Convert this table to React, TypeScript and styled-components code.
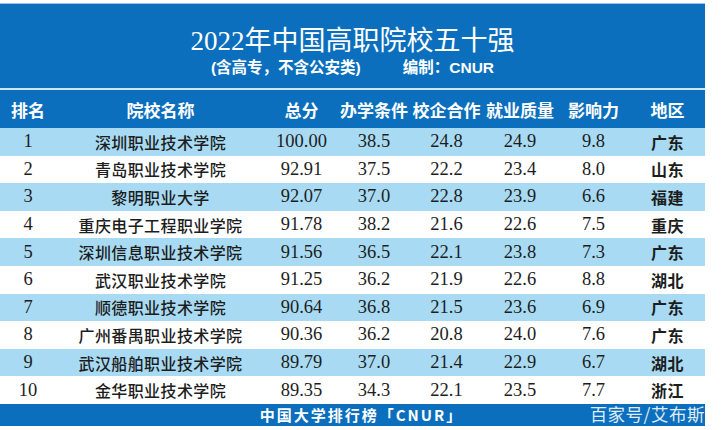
import React from "react";
import styled, { createGlobalStyle } from "styled-components";

const Global = createGlobalStyle`
  html, body { margin: 0; padding: 0; background: #ffffff; }
  body { font-family: "Noto Sans CJK SC", "Noto Sans", sans-serif; }
`;

const BLUE = "#0b6fbd";
const LIGHT = "#a8dbf3";
const COLS = "56px 209px 73px 72px 73px 74px 73px 75px";

const Page = styled.div`
  width: 705px;
  margin-top: 3px;
  position: relative;
`;

const TitleBand = styled.header`
  background: ${BLUE};
  border-top: 1px solid #8cc8f0;
  height: 87px;
  display: flex;
  flex-direction: column;
  align-items: center;
  color: #ffffff;
  box-sizing: border-box;
  padding-top: 22px;
  border-bottom: 2px solid #cfe6f7;
`;

const Title = styled.h1`
  margin: 0;
  font-family: "Liberation Serif", "Noto Sans CJK SC", serif;
  font-weight: 400;
  font-size: 27px;
  line-height: 30px;
`;

const Subtitle = styled.div`
  margin-top: 2px;
  display: flex;
  gap: 42px;
  font-family: "Liberation Sans", "Noto Sans CJK SC", sans-serif;
  font-weight: 700;
  font-size: 15.5px;
  line-height: 19px;
`;

const Grid = styled.div<{ $bg: string; $h: number }>`
  display: grid;
  grid-template-columns: ${COLS};
  height: ${(p) => p.$h}px;
  background: ${(p) => p.$bg};
  align-items: center;
`;

const HeadCell = styled.div<{ $align?: string }>`
  color: #ffffff;
  font-weight: 700;
  font-size: 17px;
  text-align: ${(p) => p.$align || "center"};
  white-space: nowrap;
  padding-left: ${(p) => (p.$align === "left" ? "11px" : "0")};
`;

const NumCell = styled.div`
  font-family: "Liberation Serif", serif;
  font-size: 18.5px;
  color: #1d1d1d;
  text-align: center;
`;

const NameCell = styled.div`
  font-family: "Noto Sans CJK SC", sans-serif;
  font-size: 16px;
  font-weight: 500;
  letter-spacing: 0.4px;
  color: #1d1d1d;
  text-align: center;
  white-space: nowrap;
`;

const RegionCell = styled(NameCell)`
  font-weight: 700;
  letter-spacing: 0.6px;
`;

const Footer = styled.footer`
  background: ${BLUE};
  height: 22px;
  display: flex;
  justify-content: center;
  align-items: center;
  color: #ffffff;
  font-weight: 700;
  font-size: 15px;
  letter-spacing: 2px;
  padding-left: 18px;
`;

const Watermark = styled.span`
  position: absolute;
  right: 0;
  bottom: 2px;
  color: rgba(255, 255, 255, 0.88);
  font-size: 17.5px;
  font-weight: 400;
  letter-spacing: 0.5px;
  line-height: 20px;
`;

const rows: [string, string, string, string, string, string, string, string][] = [
  ["1", "深圳职业技术学院", "100.00", "38.5", "24.8", "24.9", "9.8", "广东"],
  ["2", "青岛职业技术学院", "92.91", "37.5", "22.2", "23.4", "8.0", "山东"],
  ["3", "黎明职业大学", "92.07", "37.0", "22.8", "23.9", "6.6", "福建"],
  ["4", "重庆电子工程职业学院", "91.78", "38.2", "21.6", "22.6", "7.5", "重庆"],
  ["5", "深圳信息职业技术学院", "91.56", "36.5", "22.1", "23.8", "7.3", "广东"],
  ["6", "武汉职业技术学院", "91.25", "36.2", "21.9", "22.6", "8.8", "湖北"],
  ["7", "顺德职业技术学院", "90.64", "36.8", "21.5", "23.6", "6.9", "广东"],
  ["8", "广州番禺职业技术学院", "90.36", "36.2", "20.8", "24.0", "7.6", "广东"],
  ["9", "武汉船舶职业技术学院", "89.79", "37.0", "21.4", "22.9", "6.7", "湖北"],
  ["10", "金华职业技术学院", "89.35", "34.3", "22.1", "23.5", "7.7", "浙江"],
];

const headers = ["院校名称", "总分", "办学条件", "校企合作", "就业质量", "影响力", "地区"];

export default function App() {
  return (
    <>
      <Global />
      <Page>
        <TitleBand>
          <Title>2022年中国高职院校五十强</Title>
          <Subtitle>
            <span>(含高专，不含公安类)</span>
            <span>编制：CNUR</span>
          </Subtitle>
        </TitleBand>
        <Grid $bg={BLUE} $h={38}>
          <HeadCell $align="left">排名</HeadCell>
          {headers.map((h) => (
            <HeadCell key={h}>{h}</HeadCell>
          ))}
        </Grid>
        {rows.map((r, i) => (
          <Grid key={r[0]} $bg={i % 2 === 0 ? LIGHT : "#ffffff"} $h={27.6}>
            <NumCell>{r[0]}</NumCell>
            <NameCell>{r[1]}</NameCell>
            <NumCell>{r[2]}</NumCell>
            <NumCell>{r[3]}</NumCell>
            <NumCell>{r[4]}</NumCell>
            <NumCell>{r[5]}</NumCell>
            <NumCell>{r[6]}</NumCell>
            <RegionCell>{r[7]}</RegionCell>
          </Grid>
        ))}
        <Footer>中国大学排行榜「CNUR」</Footer>
        <Watermark>百家号/艾布斯</Watermark>
      </Page>
    </>
  );
}
